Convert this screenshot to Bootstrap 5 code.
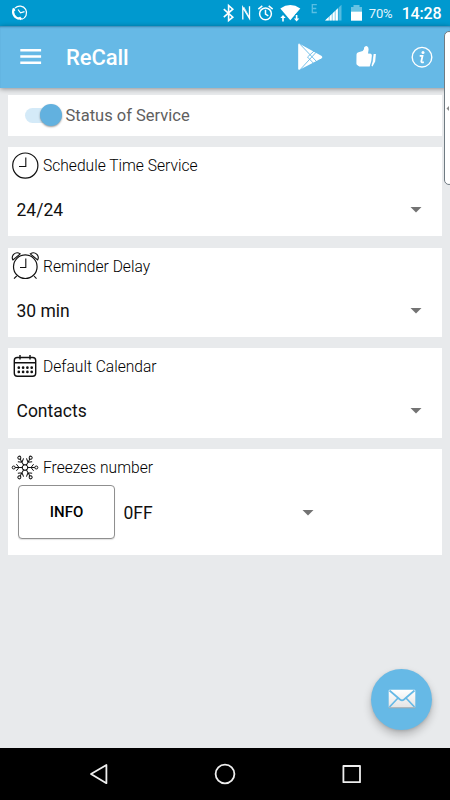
<!DOCTYPE html>
<html lang="en">
<head>
<meta charset="utf-8">
<meta name="viewport" content="width=device-width, initial-scale=1">
<title>ReCall</title>
<link href="https://cdn.jsdelivr.net/npm/bootstrap@5.3.0/dist/css/bootstrap.min.css" rel="stylesheet">
<style>
  body { font-family: Roboto, "Liberation Sans", sans-serif; background: #e8eaec; color: #111; width: 450px; height: 800px; overflow: hidden; }
  svg { display: block; flex: none; }
  .status { height: 26px; background: #0099cf; color: #fff; line-height: 26px; }
  .pct { font-size: 13px; width: 36px; padding-left: 3px; letter-spacing: -.1px; color: #e4f5fc; padding-top: 1px; }
  .clock { font-size: 16px; font-weight: 500; width: 48.3px; letter-spacing: -.2px; padding-top: 1px; }
  .appbar { height: 61.5px; background: #66b9e6; box-shadow: 0 1px 5px rgba(0,0,0,.4), inset 0 2px 2px -1px rgba(0,70,110,.45); z-index: 2; }
  .app-title { font-size: 22px; font-weight: 500; line-height: 30px; color: #fff; letter-spacing: -.1px; padding-top: 2px; }
  .panels { padding: 7.5px 8px 0; gap: 11.3px; }
  .panel { background: #fff; height: 89.4px; }
  .panel-service { height: 40.8px; padding-left: 16.5px; color: #606060; font-size: 16.5px; }
  .panel-service span { padding-top: 2px; margin-left: 1px; }
  .panel-freeze { height: 106px; }
  .head { height: 37px; padding-left: 3px; font-size: 15.6px; font-weight: 300; gap: 4px; color: #000; }
  .head span { padding-top: 2px; }
  .pick { height: 52px; padding: 0 20px 0 8.5px; font-size: 17.5px; }
  .freeze-row { height: 53px; padding-left: 10px; font-size: 17.5px; }
  .btn-info-box { width: 97px; height: 53.5px; border: 1px solid #8f8f8f; border-radius: 4px; font-size: 15px; font-weight: 500; color: #000; box-shadow: 0 1px 1px rgba(0,0,0,.12); padding: 0; background: #fff; margin-top: -1px; }
  .choice { width: 186.5px; padding-left: 8.5px; }
  .toggle-track { width: 36px; height: 15px; border-radius: 8px; background: #d4eaf8; }
  .toggle-knob { width: 22px; height: 22px; border-radius: 50%; background: #62b1df; box-shadow: 0 1px 2px rgba(0,0,0,.4); right: -1px; top: -3.5px; }
  .fab { width: 61px; height: 61px; left: 371.3px; top: 668.7px; border-radius: 50%; background: #66b9e6; box-shadow: 0 5px 9px rgba(0,0,0,.22), 0 1px 3px rgba(0,0,0,.12); }
  .edge-handle { width: 10px; height: 154px; left: 443.5px; top: 31px; background: #fff; border: 1px solid #707b82; border-radius: 5px; z-index: 3; }
  .navkeys { height: 52px; background: #000; }
</style>
</head>
<body class="d-flex flex-column position-relative">
  <header class="status d-flex flex-none justify-content-between">
    <svg width="40" height="26" viewBox="0 0 40 26" fill="none" stroke="#fff"><path d="M15 8.2A6.7 6.7 0 1 1 21.5 19.3" stroke-width="1.2"/><path d="M18 9.5l2.5 3.3 4-1.2" stroke-width="1.2"/><path d="M13.8 9c-2.1 4 .7 9.3 5.9 9.7" stroke-width="2.2"/><path d="M13 10l1.8-.8M19.4 19.2l1.7-1.6" stroke-width="3"/></svg>
    <div class="d-flex">
      <svg width="18" height="26" viewBox="219 0 18 26" fill="none" stroke="#fff" stroke-width="1.6"><path d="M222.8 9.2l9 8-4.2 3.4V5.5l4.2 3.7-9 8"/></svg>
      <svg width="16" height="26" viewBox="237 0 16 26" fill="none" stroke="#fff"><path d="M241.8 19.5V7.3l6.7 11.2V6.2" stroke-width="1.3"/><path d="M242.8 7l6 11" stroke-width=".8"/></svg>
      <svg width="23" height="26" viewBox="253 0 23 26" fill="none" stroke="#fff" stroke-width="1.5"><circle cx="264.5" cy="13.8" r="5.9"/><path d="M264.5 9.8v4.3l2.8 1.7M257.3 9.2l4-3.3M271.7 9.2l-4-3.3"/></svg>
      <svg width="28" height="26" viewBox="276 0 28 26"><path d="M279.3 8.5q10-6.8 20 0l-10 11.8z" fill="#fff"/><path d="M280 15h3.6v6H280zM294.2 14h3.6v7h-3.6z" fill="#0099cf"/><path d="M282 15l2.7 3h-1.9v3.5h-1.6V18h-1.9zM295.6 21.5l-2.7-3h1.9V15h1.6v3.5h1.9z" fill="#fff"/></svg>
      <svg width="17" height="26" viewBox="304 0 17 26" fill="none" stroke="#59bfe3" stroke-width="1.3"><path d="M315.8 4.7h-4.5v7.8h4.5M311.3 8.5h4"/></svg>
      <svg width="26" height="26" viewBox="321 0 26 26"><path d="M324 20.5L340.5 4.8v15.7z" fill="#55bbe0"/><path d="M324 20.5L337 8.2v12.3z" fill="#fff"/><path d="M328.2 14v7M331.2 11v10M334.2 8v13M337.3 5v16" stroke="#0099cf" stroke-width=".5"/></svg>
      <svg width="18" height="26" viewBox="347 0 18 26"><path d="M352.5 5h6v2h2.5v4.5h-11V7h2.5z" fill="#66c2e3"/><path d="M350 11.5h11v9.2h-11z" fill="#fff"/></svg>
      <span class="pct">70%</span>
      <span class="clock">14:28</span>
    </div>
  </header>

  <nav class="appbar d-flex align-items-center position-relative">
    <svg width="66" height="62" viewBox="0 26 66 62" stroke="#fff" stroke-width="2.4"><path d="M20.3 50.3h20.8M20.3 56.5h20.8M20.3 62.7h20.8"/></svg>
    <span class="app-title me-auto">ReCall</span>
    <svg width="50" height="62" viewBox="285 26 50 62"><path d="M299 43.5q-.8.2-.8 1.5v23.5q0 1.3.9 1.4l22.2-11.4q2-1.4 0-2.8z" fill="#fff"/><path d="M300 44.2L317 62M300 69.8L317 51.3M307.5 57l8-7.3M307.5 57l8 8.4" stroke="#66b9e6" stroke-width=".9" fill="none"/></svg>
    <svg width="60" height="62" viewBox="335 26 60 62" fill="#fff"><path d="M356.5 54.5q0-1.8 2-2.3l4.2-1.3q1.8-1.4 1.4-3.3 1-2 3-1.4 1.6.7 1.5 3.2l-.6 4 3 .3q.8.5.9 1.8l-.6 5.5-1.6 5.5h-10.4l-2.2-1.5q-.8-.5-.7-1.8z"/><path d="M373.5 53.9l2.4.2-.7 7.3-2.7 5-1.2-.6 1.2-4.5z"/><path d="M373 53.5l-.5 7.5-1.8 5.5" fill="none" stroke="#66b9e6" stroke-width=".6"/></svg>
    <svg width="55" height="62" viewBox="395 26 55 62" fill="none" stroke="#fff"><circle cx="422" cy="57.2" r="9.8" stroke-width="1.4"/><circle cx="423" cy="52.4" r="1.5" fill="#fff" stroke="none"/><path d="M419.7 55.9h2.8l-1.2 5.7q0 1.1 2.5.5" stroke-width="1.8"/></svg>
  </nav>

  <main class="panels d-flex flex-column flex-grow-1">
    <section class="panel panel-service d-flex align-items-center">
      <div class="toggle-track position-relative"><div class="toggle-knob position-absolute"></div></div>
      <span class="ps-1">Status of Service</span>
    </section>

    <section class="panel">
      <div class="head d-flex align-items-center">
        <svg width="28" height="30" viewBox="0 0 28 30" fill="none" stroke="#111"><circle cx="14.3" cy="14.6" r="12.6" stroke-width="1.2"/><path d="M14.8 6.5v9H8" stroke-width="1.1"/></svg>
        <span>Schedule Time Service</span>
      </div>
      <div class="pick d-flex align-items-center justify-content-between"><span>24/24</span><svg width="12" height="6"><path d="M.5 0h11L6 5.5z" fill="#737373"/></svg></div>
    </section>

    <section class="panel">
      <div class="head d-flex align-items-center">
        <svg width="28" height="30" viewBox="0 0 28 30" fill="none" stroke="#111" stroke-width="1.1"><circle cx="14.3" cy="15.7" r="11.8" stroke-width="1.2"/><path d="M14.8 7.5v9H9M5.7 25l-2.7 2.7M23 25l2.5 2.7M2 9C-.5 4.7 4.5-.3 9.2 2.9zM26.6 9C29 4.7 24-.3 19.3 2.9z"/></svg>
        <span>Reminder Delay</span>
      </div>
      <div class="pick d-flex align-items-center justify-content-between"><span>30 min</span><svg width="12" height="6"><path d="M.5 0h11L6 5.5z" fill="#737373"/></svg></div>
    </section>

    <section class="panel">
      <div class="head d-flex align-items-center">
        <svg width="28" height="30" viewBox="0 0 28 30" fill="none" stroke="#111" stroke-width="1.4"><rect x="3.3" y="5.5" width="21.4" height="18.8" rx="3"/><path d="M3.3 10.8h21.4M9 3V7.5M19 3V7.5"/><path d="M7.8 15.7h14M7.8 19.9h14" stroke-width="2.7" stroke-linecap="round" stroke-dasharray="0 4.3"/></svg>
        <span>Default Calendar</span>
      </div>
      <div class="pick d-flex align-items-center justify-content-between"><span>Contacts</span><svg width="12" height="6"><path d="M.5 0h11L6 5.5z" fill="#737373"/></svg></div>
    </section>

    <section class="panel panel-freeze">
      <div class="head d-flex align-items-center">
        <svg width="28" height="30" viewBox="-14 -14.5 28 30" fill="none" stroke="#111" stroke-width="1">
          <defs><g id="flake-arm"><path d="M2.6-1.5V1.5M2.6 0H9.8M6 0L8.6-3.3M6 0L8.6 3.3"/><circle cx="11.3" cy="0" r="1.5"/></g></defs>
          <use href="#flake-arm"/><use href="#flake-arm" transform="rotate(60)"/><use href="#flake-arm" transform="rotate(120)"/><use href="#flake-arm" transform="rotate(180)"/><use href="#flake-arm" transform="rotate(240)"/><use href="#flake-arm" transform="rotate(300)"/>
        </svg>
        <span>Freezes number</span>
      </div>
      <div class="freeze-row d-flex align-items-center">
        <button class="btn btn-info-box" type="button">INFO</button>
        <span class="choice">0FF</span>
        <svg width="12" height="6"><path d="M.5 0h11L6 5.5z" fill="#737373"/></svg>
      </div>
    </section>
  </main>

  <div class="edge-handle position-absolute"><svg width="6" height="153" viewBox="0 0 6 153"><path d="M1.5 76.5l2.5-2.5v5z" fill="#888"/></svg></div>

  <button class="fab position-absolute border-0 p-0 d-flex align-items-center justify-content-center" type="button" aria-label="Mail">
    <svg width="28" height="20" viewBox="0 0 28 20"><defs><linearGradient id="paper" x2="0" y2="1"><stop stop-color="#fff"/><stop offset="1" stop-color="#e4e4e4"/></linearGradient></defs><rect x=".7" y=".8" width="26.6" height="18" rx="1" fill="url(#paper)"/><path d="M.7 18.8h26.6" stroke="#a5a9ac"/><path d="M1.5 1.5l10.5 9q2 1.6 4 0l10.5-9M1.5 18l8.5-9M26.5 18L18 9" fill="none" stroke="#66b9e6" stroke-width="1.7"/></svg>
  </button>

  <footer class="navkeys">
    <svg width="450" height="52" viewBox="0 748 450 52" fill="none" stroke="#eee" stroke-width="1.8" stroke-linejoin="round"><path d="M106.4 765v18.2L91 774z"/><circle cx="225" cy="774" r="9.4"/><rect x="343.4" y="766" width="16.6" height="16.2"/></svg>
  </footer>
</body>
</html>
